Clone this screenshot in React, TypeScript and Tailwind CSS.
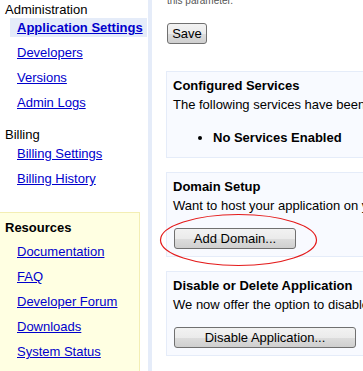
import React from "react";

const linkCls = "text-[#0000cc] underline leading-[15px] block";

function Btn({ label, w }: { label: string; w: string }) {
  return (
    <button
      className={`${w} h-[21px] rounded-[3px] border border-[#707070] bg-[linear-gradient(to_bottom,#f2f2f2_0%,#ebebeb_50%,#dddddd_51%,#cfcfcf_100%)] text-[13px] leading-[15px] text-black flex items-center justify-center`}
    >
      {label}
    </button>
  );
}

function Box({ children, cls = "" }: { children: React.ReactNode; cls?: string }) {
  return (
    <div className={`w-[420px] border border-[#e5ecf9] bg-[#f8faff] pl-[6px] pt-[6px] ${cls}`}>
      {children}
    </div>
  );
}

export default function App() {
  return (
    <div className="relative w-[363px] h-[371px] overflow-hidden bg-white flex text-[13px] text-black font-['Liberation_Sans',Arial,sans-serif]">
      {/* Sidebar */}
      <div className="w-[148px] shrink-0 flex flex-col">
        <div className="mt-[2px] pl-[5px] leading-[15px]">Administration</div>
        <div className="mt-[1px] ml-[10px] mr-[1px] h-[19px] bg-[#e5ecf9] pl-[7px] pt-[2px]">
          <a className="text-[#0000cc] underline font-bold leading-[15px] block">Application Settings</a>
        </div>
        <div className="pl-[17px]">
          <a className={`${linkCls} mt-[8px]`}>Developers</a>
          <a className={`${linkCls} mt-[10px]`}>Versions</a>
          <a className={`${linkCls} mt-[10px]`}>Admin Logs</a>
        </div>
        <div className="mt-[17px] pl-[5px] leading-[15px]">Billing</div>
        <div className="pl-[17px]">
          <a className={`${linkCls} mt-[4px]`}>Billing Settings</a>
          <a className={`${linkCls} mt-[10px]`}>Billing History</a>
        </div>
        <div className="mt-[26px] w-[140px] flex-1 border-t border-r border-[#f3eeb4] bg-[#ffffe2] pt-[7px]">
          <div className="pl-[5px] font-bold leading-[15px]">Resources</div>
          <div className="pl-[17px]">
            <a className={`${linkCls} mt-[9px]`}>Documentation</a>
            <a className={`${linkCls} mt-[10px]`}>FAQ</a>
            <a className={`${linkCls} mt-[10px]`}>Developer Forum</a>
            <a className={`${linkCls} mt-[10px]`}>Downloads</a>
            <a className={`${linkCls} mt-[10px]`}>System Status</a>
          </div>
        </div>
      </div>
      {/* Divider strip */}
      <div className="w-[4px] shrink-0 bg-[#e5ecf9]" />
      {/* Content */}
      <div className="flex-1 min-w-0 pl-[14px] flex flex-col">
        <div className="mt-[-6px] ml-[1px] text-[10px] leading-[13px] text-[#555555] whitespace-nowrap">
          this parameter.
        </div>
        <div className="mt-[16px] ml-[1px]">
          <Btn label="Save" w="w-[40px]" />
        </div>
        <Box cls="mt-[27px] pb-[12px]">
          <div className="font-bold leading-[15px]">Configured Services</div>
          <div className="mt-[4px] leading-[15px] whitespace-nowrap">
            The following services have been enabled for this application:
          </div>
          <ul className="mt-[18px] ml-[40px] list-disc font-bold leading-[15px]">
            <li>No Services Enabled</li>
          </ul>
        </Box>
        <Box cls="mt-[14px] pb-[7px]">
          <div className="font-bold leading-[15px]">Domain Setup</div>
          <div className="mt-[4px] leading-[15px] whitespace-nowrap">
            Want to host your application on your own domain?
          </div>
          <div className="mt-[15px] ml-[1px]">
            <Btn label="Add Domain..." w="w-[122px]" />
          </div>
        </Box>
        <Box cls="mt-[14px] pb-[7px]">
          <div className="font-bold leading-[15px]">Disable or Delete Application</div>
          <div className="mt-[4px] leading-[15px] whitespace-nowrap">
            We now offer the option to disable your application.
          </div>
          <div className="mt-[15px] ml-[1px]">
            <Btn label="Disable Application..." w="w-[182px]" />
          </div>
        </Box>
      </div>
      {/* Red annotation ellipse */}
      <svg className="absolute left-0 top-0 pointer-events-none" width="363" height="371">
        <ellipse cx="238.5" cy="240" rx="78" ry="25.5" fill="none" stroke="#e41b1b" strokeWidth="1.2" />
      </svg>
    </div>
  );
}
